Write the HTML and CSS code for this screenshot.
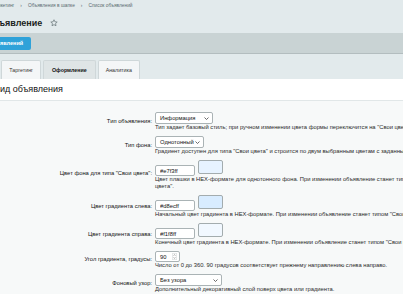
FILE: index.html
```html
<!DOCTYPE html>
<html lang="ru">
<head>
    <meta charset="UTF-8">
    <title>Объявление</title>
    <link rel="stylesheet" href="styles.css">
</head>
<body>
    <div class="breadcrumbs">
        <span>Маркетинг</span><span class="sep">›</span>
        <span>Объявления в шапке</span><span class="sep">›</span>
        <span>Список объявлений</span>
    </div>
    <div class="title-row">
        <h1>Объявление</h1>
        <svg class="star" width="8" height="8" viewBox="0 0 16 16">
            <path d="M8 1.5l1.9 4.1 4.5.5-3.3 3 .9 4.4L8 11.3l-4 2.2.9-4.4-3.3-3 4.5-.5z" fill="none" stroke="#6f7c80" stroke-width="1.6" stroke-linejoin="round"/>
        </svg>
    </div>

    <div class="toolbar">
        <a class="btn" href="#">Список объявлений</a>
    </div>

    <div class="tabs">
        <div class="tab">Основное</div>
        <div class="tab">Таргетинг</div>
        <div class="tab active">Оформление</div>
        <div class="tab">Аналитика</div>
    </div>

    <div class="panel">
        <div class="panel-head">Вид объявления</div>
        <div class="form">
            <div class="row">
                <div class="label">Тип объявления:</div>
                <div class="control">
                    <div class="select w58"><span>Информация</span><svg width="5" height="3" viewBox="0 0 10 6"><path d="M1 1l4 4 4-4" fill="none" stroke="#444" stroke-width="1.6"/></svg></div>
                </div>
                <div class="hint">Тип задает базовый стиль; при ручном изменении цвета формы переключится на "Свои цвета".</div>
            </div>

            <div class="row">
                <div class="label">Тип фона:</div>
                <div class="control">
                    <div class="select w49"><span>Однотонный</span><svg width="5" height="3" viewBox="0 0 10 6"><path d="M1 1l4 4 4-4" fill="none" stroke="#444" stroke-width="1.6"/></svg></div>
                </div>
                <div class="hint">Градиент доступен для типа "Свои цвета" и строится по двум выбранным цветам с заданным углом.</div>
            </div>

            <div class="row">
                <div class="label">Цвет фона для типа "Свои цвета":</div>
                <div class="control">
                    <input class="text" type="text" value="#e7f3ff">
                    <div class="swatch" style="background: #e7f3ff"></div>
                </div>
                <div class="hint">Цвет плашки в HEX-формате для однотонного фона. При изменении объявление станет типом "Свои<br>цвета".</div>
            </div>

            <div class="row color">
                <div class="label">Цвет градиента слева:</div>
                <div class="control">
                    <input class="text" type="text" value="#d8ecff">
                    <div class="swatch" style="background: #d8ecff"></div>
                </div>
                <div class="hint">Начальный цвет градиента в HEX-формате. При изменении объявление станет типом "Свои цвета".</div>
            </div>

            <div class="row color">
                <div class="label">Цвет градиента справа:</div>
                <div class="control">
                    <input class="text" type="text" value="#f1f8ff">
                    <div class="swatch" style="background: #f1f8ff"></div>
                </div>
                <div class="hint">Конечный цвет градиента в HEX-формате. При изменении объявление станет типом "Свои цвета".</div>
            </div>

            <div class="row">
                <div class="label">Угол градиента, градусы:</div>
                <div class="control">
                    <div class="number"><span>90</span>
                        <svg width="5" height="7" viewBox="0 0 10 14"><rect x="0.5" y="0.5" width="9" height="13" rx="2" fill="#fff" stroke="#b9c1c3"/><path d="M3 5.5l2-2.5 2 2.5M3 8.5l2 2.5 2-2.5" fill="none" stroke="#777" stroke-width="1"/></svg>
                    </div>
                </div>
                <div class="hint">Число от 0 до 360. 90 градусов соответствует прежнему направлению слева направо.</div>
            </div>

            <div class="row">
                <div class="label">Фоновый узор:</div>
                <div class="control">
                    <div class="select w67"><span>Без узора</span><svg width="5" height="3" viewBox="0 0 10 6"><path d="M1 1l4 4 4-4" fill="none" stroke="#444" stroke-width="1.6"/></svg></div>
                </div>
                <div class="hint">Дополнительный декоративный слой поверх цвета или градиента.</div>
            </div>
        </div>
    </div>
</body>
</html>
```

FILE: styles.css
```css
body {
    margin: 0;
    width: 403px;
    height: 294px;
    overflow: hidden;
    background: #e2eaec;
    font-family: "Liberation Sans", Arial, sans-serif;
    color: #111;
}

/* хлебные крошки */
.breadcrumbs {
    display: flex;
    gap: 6px;
    height: 12px;
    line-height: 12px;
    margin-left: -9px;
    font-size: 4.8px;
    color: #5b6b70;
    white-space: nowrap;
}

.title-row {
    display: flex;
    align-items: center;
    gap: 8px;
    height: 21px;
    margin-left: -14px;
}
h1 {
    margin: 0;
    font-size: 9px;
    font-weight: bold;
    color: #1b1f21;
    white-space: nowrap;
}

.toolbar {
    display: flex;
    align-items: center;
    height: 20px;
    background: #c9d3d4;
    border-bottom: 1px solid #b3bdbf;
}
.btn {
    height: 13px;
    line-height: 13px;
    padding: 0 8px;
    margin-left: -40px;
    background: #2fa2d9;
    border-radius: 2px;
    color: #fff;
    font-size: 5.5px;
    font-weight: bold;
    text-decoration: none;
    white-space: nowrap;
}

/* вкладки */
.tabs {
    display: flex;
    gap: 2px;
    margin-top: 6px;
    margin-left: -41px;
}
.tab {
    height: 18px;
    line-height: 18px;
    padding: 0 7px;
    background: #f4f6f7;
    border: 1px solid #cfd7d9;
    border-bottom: none;
    border-radius: 2px 2px 0 0;
    font-size: 5.3px;
    color: #333;
    white-space: nowrap;
}
.tab.active {
    padding: 0 8px;
    background: #dfe5e6;
    font-weight: bold;
    color: #111;
}

.panel {
    background: #fff;
}
.panel-head {
    height: 21px;
    line-height: 21px;
    margin-left: -6px;
    font-size: 9px;
    color: #111;
    border-bottom: 1px solid #e1e7e8;
}
.form {
    background: #f7f9f9;
    padding-top: 11px;
    height: 200px;
}

.row {
    display: grid;
    grid-template-columns: 152px auto;
    column-gap: 3px;
    align-items: end;
    margin-bottom: 5px;
}
.label {
    margin-bottom: -3px;
    text-align: right;
    font-size: 5.8px;
    line-height: 12px;
    white-space: nowrap;
}
.row.color .label {
    margin-bottom: -1px;
}
.control {
    display: flex;
    align-items: flex-end;
    gap: 3px;
}
.hint {
    grid-column: 2;
    font-size: 5.8px;
    line-height: 7px;
    color: #2a2a2a;
    white-space: nowrap;
}

.select, .number {
    display: flex;
    align-items: center;
    justify-content: space-between;
    box-sizing: border-box;
    height: 12px;
    padding: 0 3px 0 4px;
    background: #fff;
    border: 1px solid #aab3b5;
    border-radius: 2px;
    font-size: 5.8px;
}
.w58 { width: 58px; }
.w49 { width: 49px; }
.w67 { width: 67px; }
.number {
    width: 25px;
    height: 11px;
    padding-right: 2px;
}

.text {
    box-sizing: border-box;
    width: 40px;
    height: 11px;
    margin: 0;
    padding: 0 4px;
    border: 1px solid #aab3b5;
    border-radius: 2px;
    font-family: inherit;
    font-size: 5.8px;
    color: #111;
}
.swatch {
    box-sizing: border-box;
    width: 25px;
    height: 14px;
    margin-bottom: 2px;
    border: 1px solid #a3acae;
    border-radius: 2px;
}
```
